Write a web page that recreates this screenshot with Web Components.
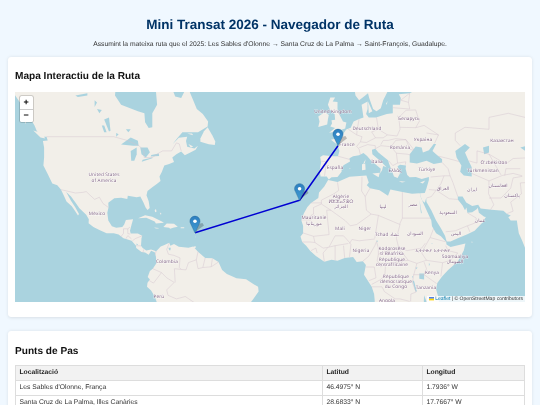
<!DOCTYPE html>
<html lang="ca"><head><meta charset="utf-8"><title>Mini Transat 2026</title>
<style>
html,body{margin:0;height:405px;overflow:hidden;background:#f0f8ff;font-family:"Liberation Sans",Arial,sans-serif;color:#333;text-rendering:geometricPrecision}
</style></head><body>
<mt-app>
  <mt-header heading="Mini Transat 2026 - Navegador de Ruta">Assumint la mateixa ruta que el 2025: Les Sables d'Olonne → Santa Cruz de La Palma → Saint-François, Guadalupe.</mt-header>
  <mt-card heading="Mapa Interactiu de la Ruta" style="--head-top:11.5px;--card-bottom:15px;--head-gap:7.5px"><route-map></route-map></mt-card>
  <mt-card heading="Punts de Pas" style="--head-top:13.5px;--card-bottom:15px;--head-gap:5px"><waypoint-table></waypoint-table></mt-card>
</mt-app>
<script>
customElements.define('mt-app',class extends HTMLElement{constructor(){super();this.attachShadow({mode:'open'}).innerHTML=`<style>:host{display:flex;flex-direction:column;gap:13.5px;padding:0 8px;filter:blur(.3px)}</style><slot></slot>`}});
customElements.define('mt-header',class extends HTMLElement{constructor(){super();this.attachShadow({mode:'open'}).innerHTML=`<style>
:host{display:block;text-align:center;margin-bottom:-7.5px}
h1{margin:0;padding-top:17px;font-size:13.5px;line-height:16px;font-weight:700;color:#003366}
p{margin:0;font-size:6.75px;line-height:8px;color:#333;height:18px;box-sizing:border-box;padding-top:8px}
</style><h1></h1><p><slot></slot></p>`;this.shadowRoot.querySelector('h1').textContent=this.getAttribute('heading')}});
customElements.define('mt-card',class extends HTMLElement{constructor(){super();this.attachShadow({mode:'open'}).innerHTML=`<style>
:host{display:block;background:#fff;border-radius:3.4px;box-shadow:0 .85px 3.4px rgba(0,0,0,.1);padding:var(--head-top) 7px var(--card-bottom)}
h2{margin:0 0 var(--head-gap);font-size:10.1px;line-height:16px;font-weight:700;color:#111}
</style><h2></h2><slot></slot>`;this.shadowRoot.querySelector('h2').textContent=this.getAttribute('heading')}});
customElements.define('waypoint-table',class extends HTMLElement{constructor(){super();this.attachShadow({mode:'open'}).innerHTML=`<style>
:host{display:block}
table{border-collapse:collapse;width:100%;table-layout:fixed;font-size:6.75px;line-height:8px}
th,td{border:.5px solid #ddd;padding:3.1px 3.4px;text-align:left;height:8px}
th{background:#f2f2f2;font-weight:700;color:#222}td{color:#333}
</style><table><colgroup><col style="width:307px"><col style="width:100px"><col></colgroup>
<tr><th>Localització</th><th>Latitud</th><th>Longitud</th></tr>
<tr><td>Les Sables d'Olonne, França</td><td>46.4975° N</td><td>1.7936° W</td></tr>
<tr><td>Santa Cruz de La Palma, Illes Canàries</td><td>28.6833° N</td><td>17.7667° W</td></tr>
<tr><td>Saint-François, Guadalupe</td><td>16.2500° N</td><td>61.2667° W</td></tr></table>`}});

const K=2.405,M=l=>Math.log(Math.tan(Math.PI/4+l*Math.PI/360))*180/Math.PI;
const px=l=>323+K*(l+1.7936),py=l=>53.7-K*(M(l)-M(46.4975));
const path=(p,c)=>'M'+p.map(q=>px(q[0]).toFixed(1)+' '+py(q[1]).toFixed(1)).join('L')+(c?'Z':'');
const P=s=>s.trim().split(/\s+/).map(t=>t.split(',').map(Number));
const LAND=[
`-140,62 -136,59 -134,57.5 -131,55 -130,54 -128,52 -127,50.5 -124.5,49 -123,49 -122.5,48 -124.5,47.8 -124,46 -124,43 -124.3,40.5 -122.5,37.8 -120.6,34.6 -118.5,34 -117,32.5 -115.8,30.4 -114.7,28.2 -112.5,26.5 -111,24.5 -109.9,23 -109.5,23.6 -111,26 -112.8,28.5 -114.8,31.7 -112.8,30 -111,27.9 -109.3,25.7 -106.5,23.3 -105.4,21.5 -105.5,20 -103.5,18.5 -101,17.3 -98,16 -95,16 -93,15.5 -91,14 -87.6,13 -85.8,11 -85.7,10 -83.5,8.4 -82,8.2 -80.5,7.3 -79.5,8.9 -78,8.3 -77.4,8.7 -79.5,9.5 -81.5,9 -83,10 -83.7,11 -83.5,14 -83.2,15 -85,15.9 -88,15.9 -88.3,17 -87.6,19.5 -87,21.5 -90,21.2 -90.7,19.5 -91.5,18.5 -94,18.2 -95.8,18.8 -97.3,21 -97.7,24 -97.2,26 -97.3,27.8 -94.8,29.4 -92,29.6 -89.4,29.1 -89.2,30.3 -85.5,29.8 -84,30 -82.8,28 -81.8,26 -81,25.1 -80.1,25.8 -80.5,28.3 -81.4,30.5 -81,32 -79,33.3 -77,34.5 -75.6,35.5 -76,37 -75,38.5 -74,40.5 -72,41 -70,41.6 -70.7,43 -69,44 -67,44.8 -65.5,43.7 -63,44.6 -61,45.3 -60,46.5 -61.5,45.7 -64.5,46.2 -65,47.8 -64.5,49 -68,48.7 -70.5,47 -69,48.3 -66.5,50.2 -60,50.2 -56,51.7 -55.8,53 -58,54.8 -60.5,56 -62,58 -64.5,61 -67,58.5 -69.5,58.8 -72,62 -78,62 -77.5,60 -77,57 -79,55 -79,51.5 -80.5,51.3 -82,52.8 -82.3,55 -85,55.5 -92,57 -94.5,59 -94,62`,
`-77.4,8.7 -75.5,10.7 -74.2,11.2 -72,12.2 -71.5,11 -70,11.7 -68,10.6 -64,10.2 -62,10.7 -60,8.5 -57,6 -54,5.8 -51.5,4.3 -50,1 -48,-0.7 -44,-2.5 -40,-2.9 -37,-4.8 -35,-6 -34.8,-8 -37,-11 -38.5,-13 -38.5,-16 -76,-16 -76.5,-14 -78,-10 -79.5,-7.5 -81.2,-6 -81,-4.3 -80,-3 -80.9,-2 -80,.5 -78.8,1.5 -77.3,3.8 -77.5,6.5 -78,8.3`,
`-84.9,21.9 -82,23.1 -79,22.5 -75,20.7 -74.2,20.2 -77.5,19.9 -78,20.7 -81.5,22.1`,
`-74.4,18.5 -73,19.9 -70,19.8 -68.4,18.6 -70,18.3 -71.6,17.8 -72,18.2`,
`-78.3,18.3 -76.3,18.1 -76.5,17.9 -77.5,17.9`,`-67.2,18.4 -65.7,18.4 -65.8,18 -67.2,18`,
`-78,25 -77.5,25.5 -77.2,24.5 -77.8,24.2`,`-75.9,24 -75.3,23.9 -75.4,23.2`,
`-61.8,16.4 -61.1,16.3 -61.3,15.9`,`-61.2,14.8 -60.9,14.5 -61,14.3`,`-61.8,10.7 -60.9,10.8 -61,10.1 -61.9,10.1`,
`-59,47.6 -55.5,46.9 -53,46.7 -52.8,47.7 -54,49.3 -56,51.5 -57.5,50.5 -59,48.5`,
`-64.5,49.9 -62,49.4 -62.5,49.9`,`-64,47 -62,46.3 -63,46`,
`-128.5,50.7 -125,50 -123.5,48.5 -125.5,48.8`,`-133,54 -131.8,54 -131.5,52.3`,
`-5.9,35.8 -2,35.1 3,36.9 10,37.3 11,35 10.2,34 11.5,33 15.5,32.3 19,30.3 20,32.5 25,31.6 29,31 32,31.2 32.5,31 32.6,29.9 34,27 35.5,24 37,21 37.3,18.8 39,16 41,14.8 43.2,12.5 43.3,11.5 45,10.5 51.2,11.9 50.5,9 48,4.5 44,1 41.5,-1.7 39.5,-4.5 39,-7 40,-10.5 40.5,-15 12,-15 13.5,-12 13.2,-9 12.2,-6 9,-1 9.8,3 8.5,4.6 6,4.3 4.5,6.3 1,5.9 -2,4.8 -4.5,5.2 -7.5,4.4 -11,6.8 -13.3,8.8 -15,11 -16.7,12.5 -17.4,14.7 -16.3,16 -16.3,19 -17,21 -16,23.7 -14.5,26.2 -13,27.7 -10,29.5 -9.7,31.5 -7.5,33.6`,
`-9,37 -9.5,38.7 -8.8,41.5 -9.2,43.2 -8,43.7 -4,43.4 -1.8,43.4 -1.2,45 -2,46.7 -4.7,48.2 -1.5,48.7 -1.7,49.7 .2,49.6 1.6,50.9 3.5,51.4 4.7,53 7,53.6 8.8,54 8,57 10.5,57.7 10.5,56 9.9,54.8 11,54 14,54 18.5,54.8 21,55 21,57 24,57 24.3,58.5 23.5,59.3 28,59.5 30,60 30,63 80,63 80,5 77.5,8 76,10 74.8,13 73.4,16 72.8,19.5 72.6,21 70,21 69,22.3 70,23 68.5,23.5 67,24.8 62,25.2 57.5,25.6 56.5,27 54,26.6 51.5,27.9 50,30 48,30 48,29 50,26.7 51,25 51.6,26 52,24 54,24.2 56,25.5 56.3,26 56.8,24 59,22.5 59.7,22.4 58,20 55,17 52,15.6 48,14 45,12.7 43.4,12.7 42.7,15 41,18 39,21 37,25 35,28 34.9,29.5 34.3,27.8 33.2,28.6 32.6,30 32.4,31.2 34.3,31.3 35,33 36,35.8 36,36.8 33,36.1 30.6,36.8 28,36.7 27,37.5 26.3,39.5 26.5,40.5 24,40.8 23,40.3 24,38 23,36.5 21.5,37 19.5,41 19,42.2 15,44.5 13.7,45.6 12.3,45.3 12.5,44 16,41.8 18.4,40 17,40.4 16.5,39 15.7,38 16,39.5 14,40.8 12,42 10.3,43.5 8.8,44.4 7,43.7 4.5,43.4 3,42.8 3.2,41.8 .5,40.6 -.3,39.4 -.3,38.5 -2,36.8 -4.5,36.7 -5.6,36 -6.5,37`,
`5,63 5,60.5 5.5,59 7,58 9,58.8 10.7,59.5 11.2,58.5 12.8,56 14.2,55.5 16,56.2 17,58 18.8,59.8 17,61 17,63`,
`21,63 21,61 22.5,60 25,60.2 28,60.5 30,60 30,63`,
`-5.5,50.1 -3.5,50.3 1.2,51.2 1.7,52.7 .3,53 -1.5,55 -2,56 -2,57.6 -4,57.7 -3,58.6 -5,58.6 -6,57 -5,55.7 -3.2,54.9 -3,53.4 -4.5,53.3 -4.3,52.5 -5,51.7 -3,51.3`,
`-10,51.6 -6.3,52.2 -6,53.5 -5.6,54.6 -7.3,55.3 -10,54.2 -9.5,53`,
`8.6,41 9.7,42.5 9.4,41.4`,`8.2,39 9.7,39.2 9.5,41.2 8.2,40.9`,`12.5,38 15.6,38.2 15.1,36.7`,`23.5,35.5 26.3,35.2 24.8,34.9`,`32.3,35 34.5,35.6 33.5,34.6`,`10.7,57.7 12.5,55.5 11,55`,`18.2,57.2 18.8,57.8 18.5,57`,`53.5,12.6 54.5,12.5 53.8,12.3`,`3,39.7 3.4,39.7 3.1,39.4`
];
const WATER=[
`28,41.5 28,44 30.5,46.3 33,46 33.5,44.5 36,45.2 38,47 39,47 37.5,45 39,44 41.5,42.5 41.5,41.5 38,41 35,42 31,41.2`,
`47,45 51,47 53,46 51,44.5 52.5,42 53.8,40 53.8,37 50.5,37.3 49,38.5 49.5,40.5 47.5,43`,
`58.5,46 61,46.5 61,44.5 59,44`,`74,46 79,46.8 76,45`,`32,-.5 34,-.5 34,-3 32,-2.7`,`29.2,-3.5 29.8,-3.5 31,-8 30.4,-8`,`34,-9.5 35,-12 34.4,-13 33.9,-12`,
`-92,46.8 -88,48.8 -85,47.9 -84.7,46.5 -87,46.5`,`-87.8,42 -88,45 -85.5,46 -85.5,44 -86.5,42`,`-84,46 -81,46 -80,44.6 -81.7,43 -83.5,44`,`-83.4,41.7 -79,42.8 -79,43 -83,42.3`,`-79.7,43.3 -76.2,43.5 -76.3,44.2 -79.4,43.8`,
`-99,53.5 -97,54 -96.4,50.6 -97,50.4`,`-100,52 -99,52 -98,50.2 -99,50.2`,`-111,59 -106,59.5 -106,59 -110,58.7`,`-103,58 -102,57.5 -103,56.5`,`-94,50 -93,49.7 -94,49`,`-90,51 -88,51 -89,50.2`,`-102,56 -100,55.8 -101,55`,`-85.6,11.9 -84.9,11.5 -85.5,11.2`,
`-72.3,10.2 -71.3,10.2 -71.5,9.1 -72,9.1`,`14,13 14.9,13 14.5,12.5`,`37.1,12 37.5,12 37.3,11.6`,`36,3.8 36.4,3.5 36,2.5`,`29,-1.5 29.4,-1.7 29.1,-2.5`,`30.5,2 31.3,2 30.7,1.3`,`32,29 33,24 32.7,23.7`
];
const BORDER=[
`-123,49 -95,49 -89.5,48 -84.5,46.5 -82.5,45 -82.4,43 -79,43 -76,44.5 -74.7,45 -71,45 -69,47.3 -67.8,47 -67,45`,
`-117,32.5 -111,31.3 -108,31.5 -106.5,31.8 -103,29 -101,29.8 -99.5,27.5 -97.2,26`,
`-92.2,14.5 -91,16 -91,17.8 -89.2,17.8 -88.3,18.5`,`-89.2,17.8 -89.2,15.9 -88.2,15.7`,`-89.2,15.1 -90,13.8`,`-83.2,15 -86,13.9 -87.3,13`,`-89.2,15.1 -87.7,13.8`,`-83.7,10.9 -85.7,11`,`-82.6,9.5 -82.9,8.1`,`-77.4,8.7 -77.9,7.2`,
`-72,12 -73,9.5 -72.3,7.5 -70,7 -67.5,6 -67.8,2 -67,1.2`,`-67,1.2 -65,1 -64,4 -60.7,5.2`,`-60.7,5.2 -60,8.5`,`-57,6 -58,2`,`-54,5.8 -54.5,2.3`,`-60.7,5.2 -60,1.5 -58,2 -54.5,2.3 -51.5,4.3`,`-67,1.2 -69.8,1.5 -69.5,-4.2`,`-69.9,-4.2 -73,-2.3 -75.2,-.1`,`-78.8,1.5 -75.2,-.1`,`-75.2,-.1 -78.5,-4.5 -80.3,-3.4`,`-69.9,-4.2 -73,-7.3 -72.5,-9.5 -69,-11`,`-69,-11 -65.3,-10 -60,-13.5`,
`-2,35 -1.5,32.2 -3.5,31 -8.7,28.7 -8.7,27.3`,`-13,27.7 -8.7,27.7`,`-8.7,27.3 -12,26 -12,23.5 -13,23 -13,21.3 -17,21.3`,`-8.7,27.3 -4.8,25 -6.5,25 -5.5,15.5 -12,14.8 -16.5,16.2`,`-4.8,25 1.2,21 3.3,19 6,19.5 12,23.5`,`12,23.5 10,25 9.5,30 8,32 8.2,36.9`,`9.5,30 11.5,33`,`25,31.6 25,22`,`25,22 36.9,22`,`25,22 24,20 24,19.5 15,23 12,23.5`,`24,19.5 22.5,14 23.5,10`,`15,23 13.5,14`,`3,11.8 4,13.5 7,13 13.5,13.7`,`3,6.4 3.6,11.7`,`8.5,4.6 11,6.7 13.5,11 14.2,12.7`,`15,7.5 14.5,5 16,2.2 18,3.5 22,4.2 27.4,5 23.5,10 19,9 15,7.5`,`14.2,12.7 15,10 15,7.5`,`12.2,-5 16,-3 17.7,-1 18,3.5`,`9.8,2.2 13.3,2.2 14,-2.3 11,-3.5`,`27.4,5 31,3.7 29.6,-1.4 29.2,-4.5 30.7,-8.2 28.5,-9 28.4,-12`,`12.2,-6 16.5,-6 17.5,-8 22,-11 24,-11 28,-12`,`34,4.2 35,1.5 34,-1 29.6,-1`,`34,-1 37.5,-3.5 39.2,-4.7`,`23.5,10 27,9 33,10 34.5,12`,`36.5,14.3 34,10 33,8 35,5 31,3.7`,`36.5,14.3 38,18`,`36.5,14.3 43,12.6`,`43,11 44,9 48,8 45,5 41.7,4`,`35,5 41.7,4`,`41.7,4 41,-1.7`,`-12,14.8 -11.4,12.3 -8,10 -6,10.3 -3,11 2.5,11.9`,`-5.5,10.5 -3,15 .5,15 3.5,11.8`,`-3,11 -3,5`,`.5,11 1,6`,`-7.5,4.4 -8,8 -6,10.3`,`-13.3,12.5 -11.4,12.3`,`-16.7,12.5 -13.3,12.5`,`-13,9 -11,10 -10.5,8`,
`-1.8,43.4 3.2,42.4`,`-8.8,41.9 -6.5,41.7 -7,39.5 -7.4,37.2`,`2.5,51 6,49.5 8.2,49 7.5,47.6 6,46.3 7,45.5 7.5,43.8`,`7,53.6 6.2,51 6,49.5`,`14.2,54 15,51 12.2,50.3 13.8,48.7 10,47.4 7.5,47.6`,`7,45.9 10.5,46.8 13.7,46.5 13.7,45.6`,`18.8,49.5 15,51`,`18.8,49.5 22.8,49.2 24,51 23.5,54 22.8,54.4`,`23.5,54 26.5,55.7 30.5,55.8 32,53 30.5,51.4 24,51.5`,`21,56.3 28,56 27.5,57.5 24.3,58 28,59.5`,`22.2,48.5 26.5,48.2 29,46 29.7,45.3`,`30.5,51.4 34,52 40,49.5 38.3,47.1`,`20.3,46.2 22.2,48 26.5,48.2 28.2,45.4 29.7,45.2`,`22.5,44.3 27,44 28.5,43.7`,`13.7,45.6 16,46.5 20.3,46.2 22.5,44.3 23,41.3 26.4,41.7 26.2,40.8`,`19.3,42 21,40.5 23,41.3`,`16,46.8 17,48 19,48 22.2,48.5`,`13.8,48.7 17,48.7 18.8,49.5`,`40,43.4 44,42.7 48.5,41.8`,`41.5,41.5 44,39.5 44.8,37.2 42.3,37.2 36.7,36.8`,`42.3,37.2 41,34.5 39,32.3`,`36,32.5 39,32.3 37,30 35,29.5`,`44.8,37.2 46,35 48,30`,`39,32.3 44.5,29.2 48,29`,`43,16.6 47,17 52,19 55,20 55.7,22 52,24`,`52,19 53,16.6`,`47,50 51,51.5 61,51 61,54 69,55 76,54`,`52.5,42 56,41.3 56,45 61,44 68,41 71,42.7 80,43`,`53.8,38 61,35.5 66.5,37.3 71,38 74.8,37.2`,`61,35.5 60.8,31 61.7,29.5 63,27 61.6,25.2`,`61,29.5 66,29.5 70,33 71,36.5 74.8,37`,`68.5,23.7 71,24.6 70,28 74.5,31 74,34.8 78,35`,`67.5,37.3 68,39.5 74,39.5`,`61,44 66,37.5`,`47,50 47,48 49,46.5`,`28,59.5 27.5,57.5`,`35,50 40,49.5`
];
const LABELS=[
[318,20.5,'United Kingdom'],[352,37.5,'Deutschland'],[394,27.5,'Беларусь'],[332,53.5,'France'],[408,48.5,'Україна'],[487,49.5,'Казахстан'],[385,56.5,'România'],[362,70.5,'Italia'],[479,71.5,"O'zbekiston"],[320,76.5,'España'],[380,79.5,'Ελλάς'],[412,79,'Türkiye'],[468,79.5,'Türkmenistan'],
[428,97.5,'العراق'],[457,98.5,'ایران'],[483,94.5,'افغانستان'],[497,104.5,'پاکستان'],
[326,106,'Algérie'],[326,111,'ⵍⵣⵣⴰⵢⴻⵔ'],[326,115.5,'الجزائر'],[368,115.5,'ليبيا'],[398,113.5,'مصر'],[433,121.5,'السعودية'],[465,129.5,'عمان'],
[299,126.5,'Mauritanie'],[299,132.5,'موريتانيا'],[325,137.5,'Mali'],[350,137.5,'Niger'],[372,143.5,'Tchad تشاد'],[400,142.5,'السودان'],[441,142.5,'اليمن'],[346,159.5,'Nigeria'],
[377,157.5,'Kodorosêse'],[377,162.5,'tî Bêafrîka'],[377,168.5,'République'],[377,173.5,'centrafricaine'],[418,159.5,'ኢትዮጵያ ኢትዮጵያ'],[440,165.5,'Soomaaliya'],[440,170.5,'الصومال'],
[381,185.5,'République'],[381,190.5,'démocratique'],[381,195.5,'du Congo'],[417,181.5,'Kenya'],[411,196.5,'Tanzania'],[372,209.5,'Angola'],
[89,83.5,'United States'],[89,89.5,'of America'],[82,122.5,'México'],[152,170.5,'Colombia'],[144,205.5,'Perú']
];
const PIN='M12.5.5C5.9.5.5 5.9.5 12.5c0 2.3.7 4.4 1.8 6.2L12.5 40.5l10.2-21.8c1.1-1.8 1.8-3.9 1.8-6.2C24.5 5.9 19.1.5 12.5.5z';
const pins=[[46.4975,-1.7936],[28.6833,-17.7667],[16.25,-61.2667]];
customElements.define('map-zoom',class extends HTMLElement{constructor(){super();this.attachShadow({mode:'open'}).innerHTML=`<style>
:host{position:absolute;left:5px;top:4px;display:block;width:12.5px;background:#fff;border-radius:1.5px;box-shadow:0 0 0 .8px rgba(0,0,0,.2)}
b{display:flex;align-items:center;justify-content:center;height:12.7px;font:700 9px/12.7px "Liberation Sans",sans-serif;color:#000}
b+b{border-top:.5px solid #ccc;height:12.3px}
</style><b>+</b><b>−</b>`}});
customElements.define('map-attribution',class extends HTMLElement{constructor(){super();this.attachShadow({mode:'open'}).innerHTML=`<style>
:host{position:absolute;right:0;bottom:0;display:flex;align-items:center;gap:1px;height:6.4px;padding:0 2px;background:rgba(255,255,255,.8);font:5.05px/6.4px "Liberation Sans",sans-serif;color:#333;white-space:nowrap}
a{color:#0078a8}svg{width:5px;height:3.4px;display:block}
</style><svg viewBox="0 0 12 8"><rect width="12" height="4" fill="#4C7BE1"/><rect y="4" width="12" height="4" fill="#FFD500"/></svg><span><a>Leaflet</a> | © OpenStreetMap contributors</span>`}});
customElements.define('route-map',class extends HTMLElement{constructor(){super();
const land=LAND.map(s=>`<path d="${path(P(s),1)}"/>`).join('');
const water=WATER.map(s=>`<path d="${path(P(s),1)}"/>`).join('');
const bord=BORDER.map(s=>`<path d="${path(P(s))}"/>`).join('');
const labs=LABELS.map(l=>`<text x="${l[0]}" y="${l[1]}">${l[2]}</text>`).join('');
const line=pins.map(p=>px(p[1]).toFixed(1)+','+py(p[0]).toFixed(1)).join(' ');
const mk=pins.map(p=>{const x=px(p[1]),y=py(p[0]);return `<path d="M${x} ${y}l3.5-3.2 5.5-4 -1.5-2.5 -4.5 1z" fill="#000" opacity=".22" filter="url(#b)"/><g transform="translate(${x-5.27} ${y-16.8}) scale(.4219)"><path d="${PIN}" fill="url(#g)" stroke="#2e6c97" stroke-width="1"/><circle cx="12.5" cy="12.5" r="4.2" fill="#fff"/></g>`}).join('');
this.attachShadow({mode:'open'}).innerHTML=`<style>
:host{display:block;position:relative;height:210px;overflow:hidden;background:#aad3df}
svg.m{display:block;width:100%;height:100%}
.land{fill:#f2efe9}.water{fill:#aad3df}
.b{fill:none;stroke:#d3c3cd;stroke-width:.45}
text{font:4.7px "Noto Sans","DejaVu Sans",sans-serif;fill:#85698a;text-anchor:middle;paint-order:stroke;stroke:rgba(255,255,255,.65);stroke-width:.8;letter-spacing:.12px}
</style><svg class="m" viewBox="0 0 510 210" preserveAspectRatio="none"><defs>
<linearGradient id="g" x1="0" y1="0" x2="0" y2="1"><stop offset="0" stop-color="#2e7fc0"/><stop offset="1" stop-color="#3f9ad1"/></linearGradient>
<filter id="b" x="-50%" y="-50%" width="200%" height="200%"><feGaussianBlur stdDeviation=".6"/></filter></defs>
<g class="land">${land}</g><g class="water">${water}</g><g class="b">${bord}</g><g>${labs}</g>
<polyline points="${line}" fill="none" stroke="#0000d2" stroke-width="1.5" stroke-linejoin="round"/>${mk}</svg><map-zoom></map-zoom><map-attribution></map-attribution>`}});
</script>
</body></html>
